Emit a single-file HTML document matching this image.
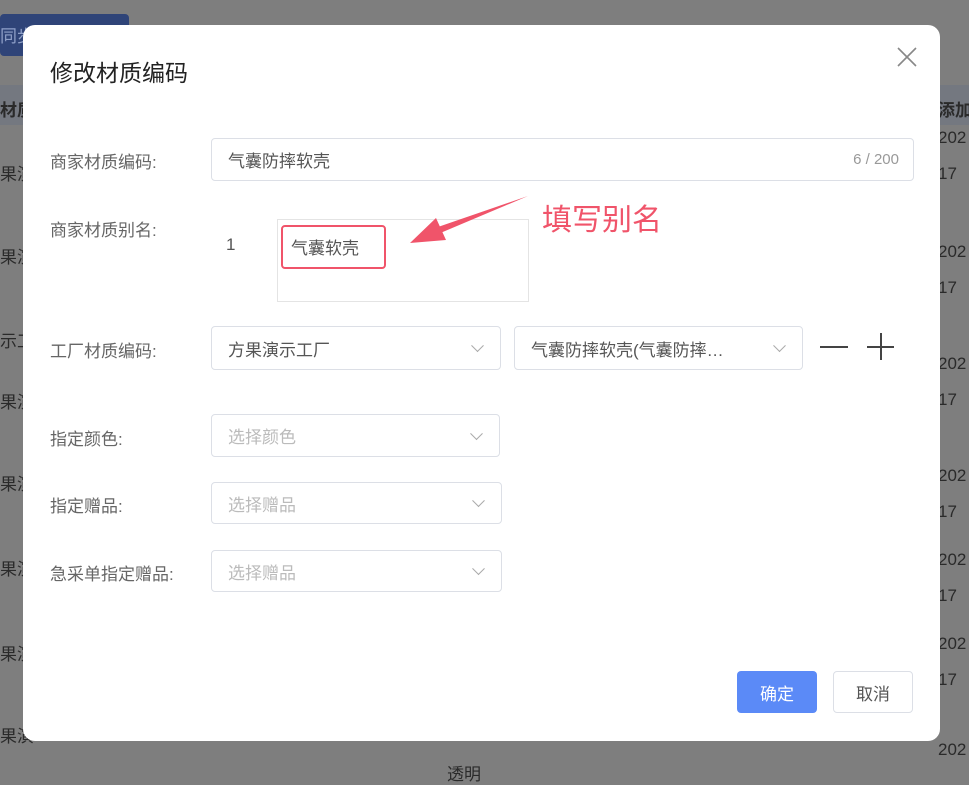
<!DOCTYPE html>
<html><head><meta charset="utf-8"><style>
*{box-sizing:border-box;margin:0;padding:0}
body{width:969px;height:777px;overflow:hidden;background:#7e7e7e;font-family:"Liberation Sans","Noto Sans CJK SC",sans-serif;position:relative;color:#333}
.a{position:absolute}
.bg{color:#2a2a2a;font-size:17px;white-space:nowrap}
.dlg{position:absolute;left:23px;top:25px;width:917px;height:716px;background:#fff;border-radius:12px}
.lbl{position:absolute;left:50px;font-size:17px;color:#666}
.inp{position:absolute;border:1px solid #dcdfe6;border-radius:4px;background:#fff;font-size:17px;color:#555;padding-left:16px;display:flex;align-items:center}
.ph{color:#bbb}
.chev{position:absolute;right:18px;top:50%;width:9px;height:9px;border-right:1.3px solid #aaa;border-bottom:1.3px solid #aaa;transform:translateY(-75%) rotate(45deg)}
.btn{position:absolute;top:671px;height:42px;width:80px;border-radius:4px;font-size:17px;display:flex;align-items:center;justify-content:center}
</style></head><body>
<div class="a" style="left:0;top:14px;width:129px;height:42px;background:#2f4478;border-radius:4px;color:#8fa0c8;font-size:17px;padding:8px 0 0 0">同步</div>
<div class="a" style="left:0;top:85px;width:969px;height:40px;background:#747880"></div>
<div class="a bg" style="left:0;top:96px;font-weight:bold">材质</div>
<div class="a bg" style="left:938px;top:96px;font-weight:bold">添加</div>
<div class="a bg" style="left:0;top:160px">果演</div>
<div class="a bg" style="left:0;top:243px">果演</div>
<div class="a bg" style="left:0;top:327px">示工</div>
<div class="a bg" style="left:0;top:388px">果演</div>
<div class="a bg" style="left:0;top:470px">果演</div>
<div class="a bg" style="left:0;top:555px">果演</div>
<div class="a bg" style="left:0;top:640px">果演</div>
<div class="a bg" style="left:0;top:722px">果演</div>
<div class="a bg" style="left:447px;top:760px">透明</div>
<div class="a bg" style="left:938px;top:120px;line-height:36px">202<br>17</div>
<div class="a bg" style="left:938px;top:234px;line-height:36px">202<br>17</div>
<div class="a bg" style="left:938px;top:346px;line-height:36px">202<br>17</div>
<div class="a bg" style="left:938px;top:458px;line-height:36px">202<br>17</div>
<div class="a bg" style="left:938px;top:542px;line-height:36px">202<br>17</div>
<div class="a bg" style="left:938px;top:626px;line-height:36px">202<br>17</div>
<div class="a bg" style="left:938px;top:740px">202</div>

<div class="dlg"></div>
<div class="a" style="left:50px;top:54px;font-size:23px;color:#222">修改材质编码</div>
<svg class="a" style="left:896px;top:46px" width="22" height="22"><path d="M2 2L20 20M20 2L2 20" stroke="#888" stroke-width="1.6"/></svg>

<div class="lbl" style="top:148px">商家材质编码:</div>
<div class="inp" style="left:211px;top:138px;width:703px;height:43px">气囊防摔软壳<span style="position:absolute;right:14px;font-size:15px;color:#999">6 / 200</span></div>

<div class="lbl" style="top:216px">商家材质别名:</div>
<div class="a" style="left:226px;top:235px;font-size:17px;color:#555">1</div>
<div class="a" style="left:277px;top:219px;width:252px;height:83px;border:1px solid #e4e4e4"></div>
<div class="a" style="left:281px;top:225px;width:105px;height:44px;border:2.5px solid #f0546a;border-radius:4px;font-size:17px;color:#555;padding:7px 0 0 8px">气囊软壳</div>
<svg class="a" style="left:400px;top:190px" width="140" height="70"><path d="M128 6L38 44L35 38Z" fill="#f0546a"/><path d="M10 53L36 28L46 50Z" fill="#f0546a"/></svg>
<div class="a" style="left:542px;top:195px;font-size:30px;color:#f0546a">填写别名</div>

<div class="lbl" style="top:337px">工厂材质编码:</div>
<div class="inp" style="left:211px;top:326px;width:290px;height:44px">方果演示工厂<i class="chev"></i></div>
<div class="inp" style="left:514px;top:326px;width:289px;height:44px">气囊防摔软壳(气囊防摔…<i class="chev"></i></div>
<div class="a" style="left:820px;top:346px;width:28px;height:2px;background:#444"></div>
<div class="a" style="left:867px;top:346px;width:27px;height:2px;background:#444"></div>
<div class="a" style="left:880px;top:333px;width:2px;height:27px;background:#444"></div>

<div class="lbl" style="top:425px">指定颜色:</div>
<div class="inp" style="left:211px;top:414px;width:289px;height:43px"><span class="ph">选择颜色</span><i class="chev"></i></div>
<div class="lbl" style="top:492px">指定赠品:</div>
<div class="inp" style="left:211px;top:482px;width:291px;height:42px"><span class="ph">选择赠品</span><i class="chev"></i></div>
<div class="lbl" style="top:560px">急采单指定赠品:</div>
<div class="inp" style="left:211px;top:550px;width:291px;height:42px"><span class="ph">选择赠品</span><i class="chev"></i></div>

<div class="btn" style="left:737px;background:#5b8af7;color:#fff">确定</div>
<div class="btn" style="left:833px;border:1px solid #dcdfe6;color:#555;background:#fff">取消</div>
</body></html>
